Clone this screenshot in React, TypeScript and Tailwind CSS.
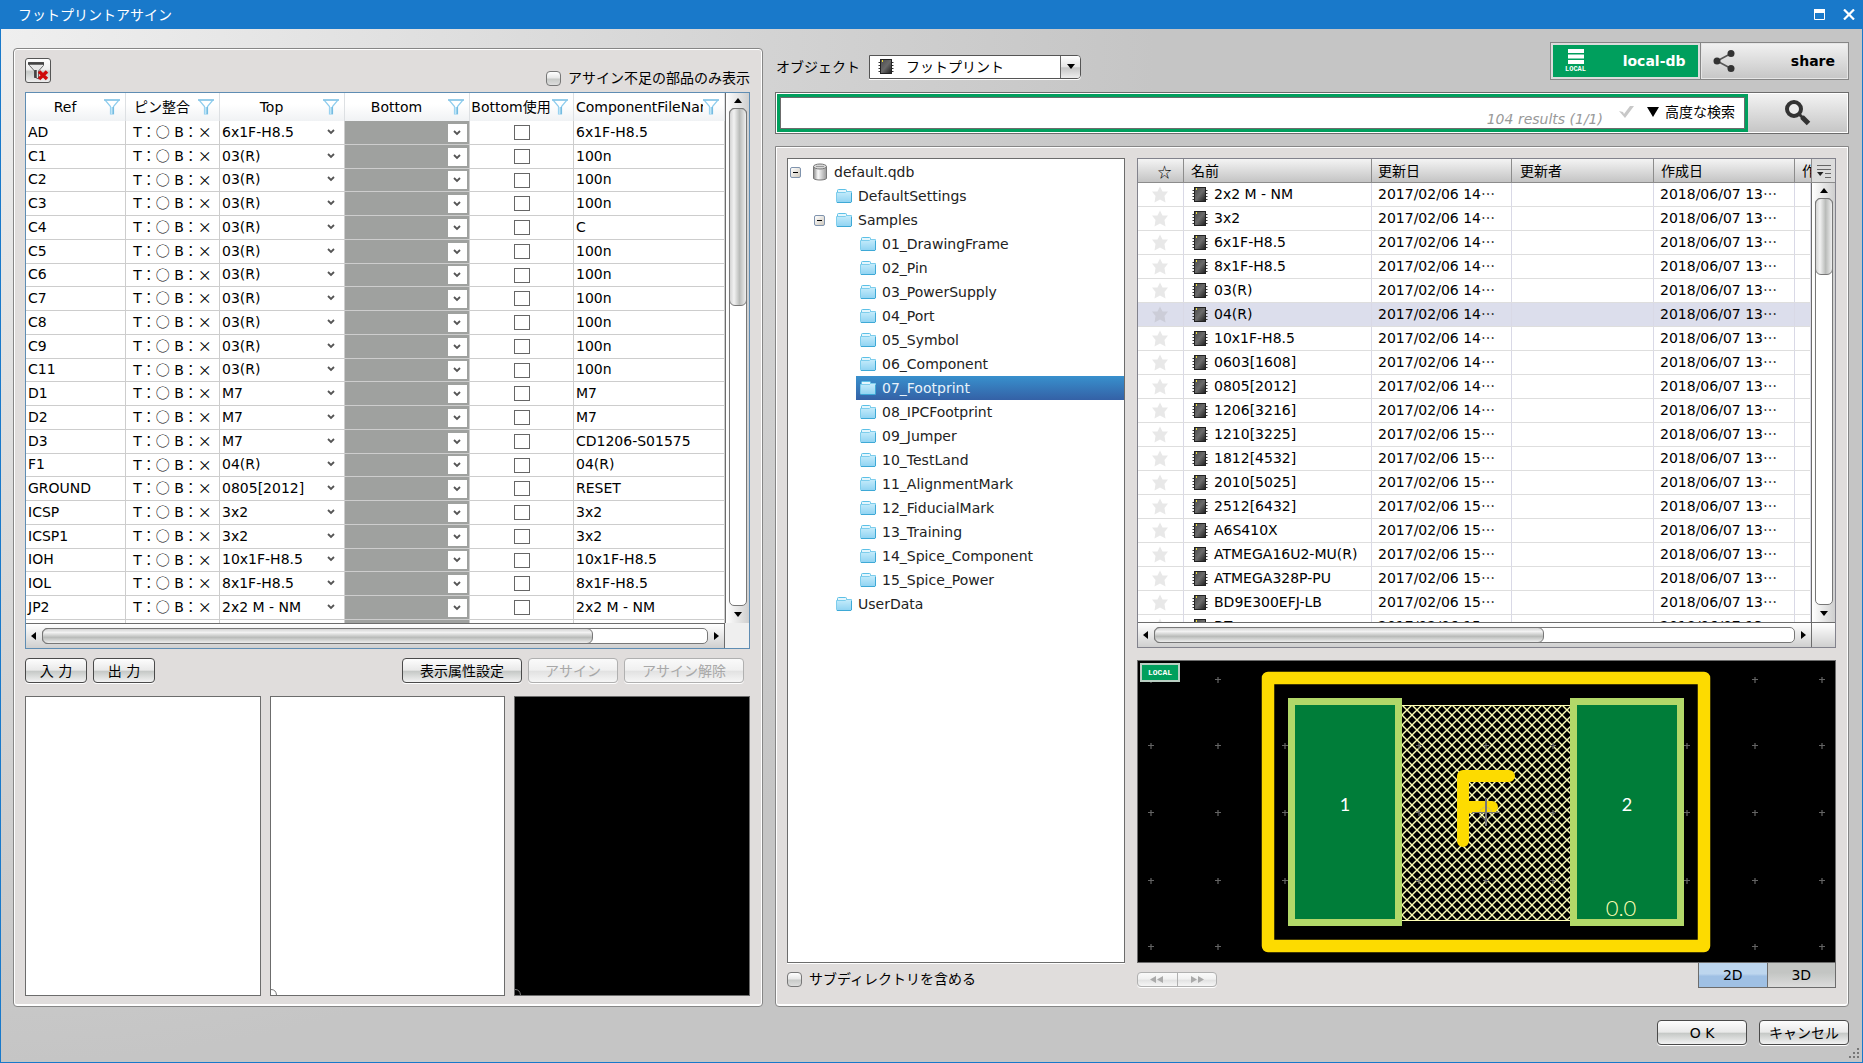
import { useState } from 'react';
import clsx from 'clsx';

const parts = [
  ['AD', '6x1F-H8.5', '6x1F-H8.5'],
  ['C1', '03(R)', '100n'],
  ['C2', '03(R)', '100n'],
  ['C3', '03(R)', '100n'],
  ['C4', '03(R)', 'C'],
  ['C5', '03(R)', '100n'],
  ['C6', '03(R)', '100n'],
  ['C7', '03(R)', '100n'],
  ['C8', '03(R)', '100n'],
  ['C9', '03(R)', '100n'],
  ['C11', '03(R)', '100n'],
  ['D1', 'M7', 'M7'],
  ['D2', 'M7', 'M7'],
  ['D3', 'M7', 'CD1206-S01575'],
  ['F1', '04(R)', '04(R)'],
  ['GROUND', '0805[2012]', 'RESET'],
  ['ICSP', '3x2', '3x2'],
  ['ICSP1', '3x2', '3x2'],
  ['IOH', '10x1F-H8.5', '10x1F-H8.5'],
  ['IOL', '8x1F-H8.5', '8x1F-H8.5'],
  ['JP2', '2x2 M - NM', '2x2 M - NM'],
  ['', '', ''],
];

const folders = [
  '01_DrawingFrame',
  '02_Pin',
  '03_PowerSupply',
  '04_Port',
  '05_Symbol',
  '06_Component',
  '07_Footprint',
  '08_IPCFootprint',
  '09_Jumper',
  '10_TestLand',
  '11_AlignmentMark',
  '12_FiducialMark',
  '13_Training',
  '14_Spice_Component',
  '15_Spice_Power',
];

const footprints = [
  ['2x2 M - NM', '14'],
  ['3x2', '14'],
  ['6x1F-H8.5', '14'],
  ['8x1F-H8.5', '14'],
  ['03(R)', '14'],
  ['04(R)', '14'],
  ['10x1F-H8.5', '14'],
  ['0603[1608]', '14'],
  ['0805[2012]', '14'],
  ['1206[3216]', '14'],
  ['1210[3225]', '15'],
  ['1812[4532]', '15'],
  ['2010[5025]', '15'],
  ['2512[6432]', '15'],
  ['A6S410X', '15'],
  ['ATMEGA16U2-MU(R)', '15'],
  ['ATMEGA328P-PU', '15'],
  ['BD9E300EFJ-LB', '15'],
  ['BZ', '15'],
];

const glossy =
  'border border-[#4a4a4a] rounded-[4px] shadow-[0_1px_0_#fff] bg-[linear-gradient(#fdfdfd,#e9e9e9_48%,#c6c9c7_54%,#f2f2f2)]';
const glossyOff = 'border border-[#b0b0b0] rounded-[4px] shadow-[0_1px_0_#fff] bg-[linear-gradient(#fafafa,#f0f0f0_48%,#e2e2e2_54%,#f6f6f6)] text-[#a8a8a8]';
const panel = 'border border-[#868686] rounded-[4px] bg-[#e0dddc] shadow-[inset_0_0_0_1px_#fff,inset_0_-2px_0_#fff]';
const jp = "font-['Noto_Sans_CJK_JP',sans-serif]";

function FilterIcon() {
  return (
    <svg width="16" height="16" viewBox="0 0 16 16" aria-hidden>
      <path d="M1 1h14L9.5 7.5V15H6.500V7.500Z" fill="#fff" stroke="#8fcdee" strokeWidth="1.200" />
      <path d="M0 1h16" stroke="#86c5e6" strokeWidth="1.500" />
      <path d="M9 8v7" stroke="#6cb6dc" strokeWidth="1.500" />
      <path d="M7.500 8v7" stroke="#bfe6f8" strokeWidth="1.500" />
    </svg>
  );
}

function ChipIcon() {
  return (
    <svg width="16" height="16" viewBox="0 0 16 16" className="shrink-0" aria-hidden>
      <defs>
        <linearGradient id="chip" x1="0" y1="0" x2="1" y2="1">
          <stop offset="0" stopColor="#4a4a4a" />
          <stop offset=".5" stopColor="#6a6a6a" />
          <stop offset="1" stopColor="#1c1c1c" />
        </linearGradient>
      </defs>
      <path d="M.5 4.500h15M.5 7.500h15M.5 10.500h15M.5 13.500h15" stroke="#333" />
      <rect x="2.500" y="1.500" width="11" height="14" fill="url(#chip)" stroke="#222" />
      <path d="M4.500 2v2" stroke="#f0e03c" />
    </svg>
  );
}

function FolderIcon() {
  return (
    <svg width="16" height="16" viewBox="0 0 16 16" className="shrink-0" aria-hidden>
      <defs>
        <linearGradient id="folder" x1="0" y1="0" x2="0" y2="1">
          <stop offset="0" stopColor="#c6ecfb" />
          <stop offset="1" stopColor="#8fd3f2" />
        </linearGradient>
      </defs>
      <path d="M1.500 5V2.500q0-1 1-1h7q1 0 1 1V4" fill="#e4f6fd" stroke="#5cc0e6" />
      <path d="M.5 4.500h9l1-1h5v10q0 1-1 1h-13q-1 0-1-1Z" fill="url(#folder)" stroke="#7dcdec" />
      <path d="M1 14.500h14M15.500 5v9" stroke="#3ea9d6" />
    </svg>
  );
}

function DbIcon() {
  return (
    <svg width="16" height="18" viewBox="0 0 16 18" className="shrink-0" aria-hidden>
      <defs>
        <linearGradient id="db">
          <stop offset="0" stopColor="#8a8a8a" />
          <stop offset=".35" stopColor="#fafafa" />
          <stop offset="1" stopColor="#9a9a9a" />
        </linearGradient>
      </defs>
      <path d="M1.500 3.500v12c2 2 11 2 13 0v-12Z" fill="url(#db)" stroke="#777" />
      <ellipse cx="8" cy="3.500" rx="6.500" ry="2.500" fill="#d8d8d8" stroke="#777" />
      <path d="M4 3.500h8" stroke="#999" />
    </svg>
  );
}

function Chevron() {
  return (
    <svg width="8" height="6" viewBox="0 0 8 6" aria-hidden>
      <path d="M1 1l3 3 3-3" fill="none" stroke="#555" strokeWidth="1.800" />
    </svg>
  );
}

function Triangle({ dir }: { dir: 'up' | 'down' | 'left' | 'right' }) {
  const d = { up: 'M4 1l4 5H0Z', down: 'M4 6l4-5H0Z', left: 'M1 4l5-4v8Z', right: 'M7 4L2 0v8Z' }[dir];
  return (
    <svg width="8" height="8" viewBox="0 0 8 8" aria-hidden>
      <path d={d} fill="#000" />
    </svg>
  );
}

function VScroll({ thumb }: { thumb: string }) {
  return (
    <div className="w-[24px] shrink-0 flex flex-col items-center border-l border-[#6c6c6c] bg-[linear-gradient(90deg,#fff,#cfcfcf)]">
      <div className="h-[15px] flex items-center"><Triangle dir="up" /></div>
      <div className="flex-1 w-[18px] rounded-[5px] border border-[#777] bg-white">
        <div className={clsx('-m-px rounded-[6px] border border-[#777] bg-[linear-gradient(90deg,#d4d4d4,#f2f2f2_25%,#b9bbb9_60%,#eee)]', thumb)} />
      </div>
      <div className="h-[17px] flex items-center"><Triangle dir="down" /></div>
    </div>
  );
}

function HScroll({ thumb }: { thumb: string }) {
  return (
    <div className="flex-1 flex items-center border-t border-r border-[#6c6c6c] bg-[linear-gradient(#fff,#cfcfcf)]">
      <div className="w-4 flex justify-center"><Triangle dir="left" /></div>
      <div className="flex-1 h-4 rounded-[5px] border border-[#777] bg-white">
        <div className={clsx('-m-px h-4 rounded-[6px] border border-[#777] bg-[linear-gradient(#d4d4d4,#f2f2f2_25%,#b9bbb9_60%,#eee)]', thumb)} />
      </div>
      <div className="w-4 flex justify-center"><Triangle dir="right" /></div>
    </div>
  );
}

function GlossCheck({ label }: { label: string }) {
  return (
    <label className="flex items-center gap-[7px]">
      <input
        type="checkbox"
        className="appearance-none size-[15px] rounded-[4px] border border-[#777] bg-[linear-gradient(#fff,#e8e8e8_45%,#c8cac8_55%,#ddd)] checked:bg-[#8ab]"
      />
      {label}
    </label>
  );
}

function PartsTable() {
  const heads = ['Ref', 'ピン整合', 'Top', 'Bottom', 'Bottom使用', 'ComponentFileName'];
  return (
    <div className="flex-1 min-h-0 flex flex-col border border-[#5f8db3] bg-white">
      <div className="flex-1 min-h-0 flex">
        <div className="flex-1 min-w-0 overflow-hidden">
          <table className="w-full table-fixed border-separate border-spacing-0">
            <colgroup>
              <col className="w-[100px]" />
              <col className="w-[94px]" />
              <col className="w-[125px]" />
              <col className="w-[125px]" />
              <col className="w-[104px]" />
              <col />
            </colgroup>
            <thead>
              <tr className="h-7 bg-[linear-gradient(#fff_40%,#f0f2f4)]">
                {heads.map((h, i) => (
                  <th key={h} className="p-0 font-normal border-r border-[#dde0e3]">
                    <div className="flex items-center pr-[5px]">
                      <span className={clsx('flex-1 min-w-0 overflow-hidden whitespace-nowrap', i === 5 && 'text-left pl-[2px]')}>{h}</span>
                      <button aria-label={`${h} フィルタ`} className="shrink-0"><FilterIcon /></button>
                    </div>
                  </th>
                ))}
              </tr>
            </thead>
            <tbody className="leading-[18px]">
              {parts.map(([ref, top, file], i) => (
                <tr key={i} className="h-6 nth-[4n+3]:h-[23px] [&>td]:p-0 [&>td]:border-r [&>td]:border-b [&>td]:border-[#cdcdcd]">
                  <td><div className="pl-[2px] pb-[2px]">{ref}</div></td>
                  <td className="text-center whitespace-nowrap">
                    {ref && (
                      <div className="pb-[2px]">
                        T<span className={jp}>：○</span> B<span className={jp}>：×</span>
                      </div>
                    )}
                  </td>
                  <td>
                    <div className="relative flex items-center pb-[2px]">
                      <select aria-label={`${ref} Top`} className="appearance-none w-full h-[18px] pl-[2px] outline-none">
                        <option>{top}</option>
                      </select>
                      {ref && <span className="absolute right-[9px] pointer-events-none"><Chevron /></span>}
                    </div>
                  </td>
                  <td className="bg-[#9fa19f]">
                    <div className="relative flex items-center justify-end h-[18px] pr-[2px]">
                      <select aria-label={`${ref} Bottom`} className="appearance-none w-[19px] h-[18px] bg-white outline-none" />
                      <span className="absolute right-[8px] pointer-events-none"><Chevron /></span>
                    </div>
                  </td>
                  <td>
                    <input type="checkbox" aria-label={`${ref} Bottom使用`} className="appearance-none block mx-auto w-4 h-[15px] border border-[#666] bg-white checked:bg-[#8ab]" />
                  </td>
                  <td><div className="pl-[2px] pb-[2px]">{file}</div></td>
                </tr>
              ))}
            </tbody>
          </table>
        </div>
        <VScroll thumb="h-[40%]" />
      </div>
      <div className="h-[25px] shrink-0 flex">
        <HScroll thumb="w-[83%]" />
        <div className="w-6 bg-[#efefef]" />
      </div>
    </div>
  );
}

function LeftPanel() {
  return (
    <section className={clsx(panel, 'min-w-0 min-h-0 flex flex-col pl-[11px] pr-[12px] pt-[9px] pb-[10px]')}>
      <div className="flex items-start justify-between h-[34px]">
        <button aria-label="フィルタ解除" className="w-[26px] h-[25px] border border-[#555] rounded-[3px] bg-[linear-gradient(#fff,#eee_45%,#c6c9c7_55%,#eee)] flex items-center justify-center">
          <svg width="22" height="20" viewBox="0 0 22 20" aria-hidden>
            <path d="M1.500 1.500h15v3l-5 5.500v8l-4-2v-6l-5-5.500Z" fill="#e8e8e8" stroke="#666" />
            <path d="M1 2.500h16" stroke="#444" strokeWidth="2.500" />
            <path d="M8.500 9v8" stroke="#444" strokeWidth="2.500" />
            <path d="M12 10.500l8 7.500M20 10.500l-8 7.500" stroke="#cf0a0a" strokeWidth="3.500" />
          </svg>
        </button>
        <div className="pt-[10px]"><GlossCheck label="アサイン不足の部品のみ表示" /></div>
      </div>
      <PartsTable />
      <div className="flex gap-[6px] mt-[9px] pr-[6px] h-[25px] shrink-0">
        <button className={clsx(glossy, 'w-[62px]')}>入 力</button>
        <button className={clsx(glossy, 'w-[62px]')}>出 力</button>
        <button className={clsx(glossy, 'w-[120px] ml-auto')}>表示属性設定</button>
        <button disabled className={clsx(glossyOff, 'w-[90px]')}>アサイン</button>
        <button disabled className={clsx(glossyOff, 'w-[120px]')}>アサイン解除</button>
      </div>
      <div className="grid grid-cols-3 gap-[9px] mt-[13px] h-[300px] shrink-0">
        <div className="border border-[#6c6c6c] bg-white" />
        <div className="border border-[#6c6c6c] bg-white flex items-end"><CornerMark /></div>
        <div className="border border-[#6c6c6c] bg-black flex items-end"><CornerMark /></div>
      </div>
    </section>
  );
}

function CornerMark() {
  return (
    <svg width="6" height="6" viewBox="0 0 6 6" aria-hidden>
      <path d="M0 .5Q5 .5 5.500 6" fill="none" stroke="#777" />
    </svg>
  );
}

function Expander() {
  return (
    <button aria-label="折りたたむ" className="size-[11px] shrink-0 border border-[#7f93ad] rounded-[2px] bg-[linear-gradient(135deg,#fff,#cfc9be)] flex items-center justify-center">
      <span className="w-[5px] h-px bg-black" />
    </button>
  );
}

function Tree() {
  const [selected, setSelected] = useState('07_Footprint');
  const row = 'h-6 w-full flex items-center';
  return (
    <ul className="flex-1 min-h-0 overflow-hidden pt-px border border-[#6c6c6c] bg-white shadow-[0_1px_0_#fff] text-[#222]">
      <li>
        <div className={clsx(row, 'pl-[2px]')}><Expander /><span className="ml-[11px] flex gap-[6px] items-center"><DbIcon />default.qdb</span></div>
        <ul>
          <li className={clsx(row, 'pl-[48px] gap-[6px]')}><FolderIcon />DefaultSettings</li>
          <li>
            <div className={clsx(row, 'pl-[26px]')}><Expander /><span className="ml-[11px] flex gap-[6px] items-center"><FolderIcon />Samples</span></div>
            <ul className="pl-[68px]">
              {folders.map((f) => (
                <li key={f}>
                  <button
                    onClick={() => setSelected(f)}
                    className={clsx(row, 'pl-1 gap-[6px]', f === selected && 'bg-[linear-gradient(#3890cd,#3461a6)] text-[#e8f2fa]')}
                  >
                    <FolderIcon />
                    {f}
                  </button>
                </li>
              ))}
            </ul>
          </li>
          <li className={clsx(row, 'pl-[48px] gap-[6px]')}><FolderIcon />UserData</li>
        </ul>
      </li>
    </ul>
  );
}

function FootprintList() {
  const th = 'p-0 font-normal text-left border-r border-b border-[#8c8c8c]';
  return (
    <div className="flex-1 min-h-0 flex flex-col border border-[#82828c] bg-white">
      <div className="flex-1 min-h-0 flex">
        <div className="flex-1 min-w-0 overflow-hidden">
          <table className="w-full table-fixed border-separate border-spacing-0">
            <colgroup>
              <col className="w-[46px]" />
              <col className="w-[188px]" />
              <col className="w-[140px]" />
              <col className="w-[142px]" />
              <col className="w-[141px]" />
              <col />
            </colgroup>
            <thead>
              <tr className="h-6 bg-[linear-gradient(#f4f4f4,#c2c2c2)]">
                <th className={th}><div className={clsx(jp, 'pl-[8px] text-center leading-[20px]')}>☆</div></th>
                <th className={clsx(th, 'pl-[7px]')}>名前</th>
                <th className={clsx(th, 'pl-[6px]')}>更新日</th>
                <th className={clsx(th, 'pl-2')}>更新者</th>
                <th className={clsx(th, 'pl-[7px]')}>作成日</th>
                <th className={clsx(th, 'border-r-0')}><div className="pl-[7px] overflow-hidden whitespace-nowrap">作</div></th>
              </tr>
            </thead>
            <tbody className="leading-[20px]">
              {footprints.map(([name, hour]) => (
                <tr key={name} className={clsx('h-6 [&>td]:p-0 [&>td]:border-r [&>td]:border-[#d9d9e6] [&>td]:border-b [&>td]:border-b-[#dedede]', name === '04(R)' && 'bg-[#dcdeec]')}>
                  <td>
                    <svg width="16" height="17" viewBox="0 0 16 17" className="ml-[14px]" aria-hidden>
                      <path d="M8 .5l2.500 5h5.500l-3.500 4.500 1 6.500-5.500-3-5.500 3 1-6.500-3.500-4.500h5.500Z" fill="#8c8c8c" fillOpacity=".2" />
                    </svg>
                  </td>
                  <td><div className="flex items-center gap-[6px] pl-[8px] pb-[2px] whitespace-nowrap"><ChipIcon />{name}</div></td>
                  <td><div className="pl-[6px] pb-[2px] whitespace-nowrap">2017/02/06 {hour}<span className={jp}>…</span></div></td>
                  <td />
                  <td><div className="pl-[6px] pb-[2px] whitespace-nowrap">2018/06/07 13<span className={jp}>…</span></div></td>
                  <td />
                </tr>
              ))}
            </tbody>
          </table>
        </div>
        <div className="flex flex-col">
          <button aria-label="列の設定" className="h-6 w-[24px] bg-[#dcdcdc] border-l border-b border-[#8c8c8c] flex items-center justify-center">
            <svg width="14" height="14" viewBox="0 0 14 14" aria-hidden>
              <path d="M0 1.500h14M0 5.500h14M8 9.500h6M8 13.500h6" stroke="#666" />
              <path d="M0 8h6.500L3.200 12Z" fill="#222" />
            </svg>
          </button>
          <div className="flex-1 flex"><VScroll thumb="h-[19%]" /></div>
        </div>
      </div>
      <div className="h-[25px] shrink-0 flex">
        <HScroll thumb="w-[61%]" />
        <div className="w-[23px] border-t border-[#6c6c6c] bg-[linear-gradient(#fff,#cfcfcf)]" />
      </div>
    </div>
  );
}

const gridX = [13, 80, 147, 281, 348, 415, 549, 617, 684];
const gridY = [18, 84, 151, 219, 285];

function Preview() {
  return (
    <div className="relative h-[303px] shrink-0 mt-3 border border-[#6c6c6c] bg-black">
      <svg className="w-full h-full" viewBox="0 0 697 301" role="img" aria-label="フットプリントのプレビュー">
        <defs>
          <pattern id="hatch" width="10" height="10" patternUnits="userSpaceOnUse" x="4" y="4">
            <path d="M-1-1l12 12M11-1L-1 11" stroke="#ffffb4" strokeWidth="1.400" />
          </pattern>
        </defs>
        <rect x="264" y="44" width="168" height="215" fill="url(#hatch)" />
        <path d="M264 44.500h168M264 259.500h168" stroke="#ffffb4" />
        {gridY.flatMap((y) =>
          gridX
            .filter((x) => !((y === 18 || y === 285) && x > 100 && x < 600))
            .map((x) => <path key={`${x}-${y}`} d={`M${x - 3} ${y + 0.5}h6M${x} ${y - 2}v6`} stroke="#646464" strokeWidth="1.200" />),
        )}
        <path d="M130 17h436v268h-436Z" fill="none" stroke="#fddb00" strokeWidth="12.500" strokeLinejoin="round" />
        <rect x="153.500" y="40.500" width="107" height="221" fill="#007d39" stroke="#b2d869" strokeWidth="7" />
        <rect x="435.500" y="40.500" width="107" height="221" fill="#007d39" stroke="#b2d869" strokeWidth="7" />
        <path d="M371 115h-46v65M325 146h29" fill="none" stroke="#fddb00" strokeWidth="12" strokeLinecap="round" strokeLinejoin="round" />
        <path d="M348 145l5 4v6l-5 5-6-5v-6Z" fill="none" stroke="#aaa" strokeWidth=".800" strokeDasharray="2 1" />
        <path d="M334 151.500h28" stroke="#777" />
        <path d="M348 137v28" stroke="#777" strokeWidth="2" />
        <g fill="#fff" textAnchor="middle" className="font-['Lato',sans-serif]">
          <text x="207" y="150" fontSize="18">1</text>
          <text x="489" y="150" fontSize="18">2</text>
          <text x="483" y="255" fontSize="22" fontWeight="300" fill="#ffffb4">0.0</text>
        </g>
      </svg>
      <span className="absolute left-[2px] top-[2px] w-10 h-[19px] border-2 border-[#b9cfc3] bg-[#009f5d] text-white text-[8px] font-bold leading-[15px] text-center font-['Liberation_Mono',monospace]">
        LOCAL
      </span>
    </div>
  );
}

function ObjectBar() {
  return (
    <div className="flex justify-between h-[38px]">
      <div className="flex items-center gap-[9px] pt-[12px]">
        <label htmlFor="object" className="pl-px">オブジェクト</label>
        <div className="relative w-[212px] h-6 flex bg-white border border-[#555] rounded-r-[4px] shadow-[0_1px_0_#fff]">
          <select id="object" className="appearance-none flex-1 pl-[36px] outline-none">
            <option>フットプリント</option>
          </select>
          <span className="absolute left-[8px] top-[2px] pointer-events-none"><ChipIcon /></span>
          <span className="absolute right-0 w-[20px] h-full border-l border-[#666] rounded-r-[3px] bg-[linear-gradient(#fff,#e6e6e6_48%,#c6c6c6_54%,#eee)] flex items-center justify-center pointer-events-none">
            <Triangle dir="down" />
          </span>
        </div>
      </div>
      <div className="w-[299px] grid grid-cols-2 border border-[#868686] font-bold">
        <button className="flex items-center justify-between pl-3 pr-[12px] text-white bg-[#009f5d] border-2 border-[#dcdcdc]">
          <span className="flex flex-col items-center">
            <svg width="16" height="15" viewBox="0 0 16 15" aria-hidden>
              <path d="M0 2h16M0 7.500h16M0 13h16" stroke="#fff" strokeWidth="4" />
            </svg>
            <span className="mt-px text-[7px] leading-[8px] font-['Liberation_Mono',monospace]">LOCAL</span>
          </span>
          local-db
        </button>
        <button className="flex items-center justify-between pl-3 pr-[13px] border-l border-[#868686] bg-[linear-gradient(#f2f2f2,#c6c6c6)] shadow-[inset_0_0_0_1px_#e6e6e6]">
          <svg width="22" height="22" viewBox="0 0 22 22" aria-hidden>
            <path d="M18 3.500L4 11l14 7.500" fill="none" stroke="#555" strokeWidth="1.600" />
            <g fill="#333"><circle cx="18" cy="3.500" r="3.500" /><circle cx="4" cy="11" r="3.500" /><circle cx="18" cy="18.500" r="3.500" /></g>
          </svg>
          share
        </button>
      </div>
    </div>
  );
}

function SearchBar() {
  return (
    <div className="flex h-[42px] mt-3 border border-[#6c6c6c] bg-white p-px">
      <div className="flex-1 min-w-0 border-[3px] border-[#009f5d] flex">
        <div className="flex-1 flex items-center border border-[#6c6c6c] bg-white pb-[2px]">
          <input type="text" aria-label="検索" className="flex-1 min-w-0 h-full px-2 outline-none" />
          <span className="italic text-[#999] pt-[14px]">104 results (1/1)</span>
          <svg width="15" height="12" viewBox="0 0 15 12" className="ml-[16px]" aria-hidden>
            <path d="M0 5l4 1 1 2L11 0h4L6 12Z" fill="#c8c8c8" />
          </svg>
          <button className="ml-[13px] mr-[9px] flex items-center gap-[6px] text-black">
            <svg width="12" height="10" viewBox="0 0 12 10" aria-hidden><path d="M0 0h12L6 10Z" /></svg>
            高度な検索
          </button>
        </div>
      </div>
      <button aria-label="検索を実行" className="w-[99px] shrink-0 bg-[linear-gradient(#f2f2f2,#c6c6c6)] flex items-center justify-center">
        <svg width="26" height="26" viewBox="0 0 26 26" aria-hidden>
          <circle cx="9" cy="9" r="7" fill="#ececec" stroke="#333" strokeWidth="4" />
          <path d="M14 14l4 4" stroke="#333" strokeWidth="3" />
          <path d="M17 17l6.500 6.500" stroke="#333" strokeWidth="5" />
        </svg>
      </button>
    </div>
  );
}

function RightPanel() {
  return (
    <section className={clsx(panel, 'rounded-t-none mt-3 flex-1 min-h-0 flex gap-3 pl-[11px] pr-[12px] pt-[11px]')}>
      <div className="w-[338px] shrink-0 flex flex-col pb-[14px]">
        <Tree />
        <div className="h-[28px] mt-px pt-[5px] shrink-0"><GlossCheck label="サブディレクトリを含める" /></div>
      </div>
      <div className="flex-1 min-w-0 flex flex-col pb-[18px]">
        <FootprintList />
        <Preview />
        <div className="flex justify-between h-[25px] shrink-0">
          <div className={clsx(glossyOff, 'flex w-20 h-[15px] mt-[9px]')}>
            <button disabled aria-label="前へ" className="flex-1 border-r border-[#b0b0b0] flex items-center justify-center">
              <svg width="14" height="7" viewBox="0 0 14 7" aria-hidden><path d="M6 0v7L0 3.500ZM13 0v7L7 3.500Z" fill="#aaa" /></svg>
            </button>
            <button disabled aria-label="次へ" className="flex-1 flex items-center justify-center">
              <svg width="14" height="7" viewBox="0 0 14 7" aria-hidden><path d="M1 0v7l6-3.500ZM8 0v7l6-3.500Z" fill="#aaa" /></svg>
            </button>
          </div>
          <div className="flex w-[138px] border border-t-0 border-[#6c6c6c]">
            <button className="flex-1 bg-[linear-gradient(#bdd6ee_45%,#9fc0e4_55%)]">2D</button>
            <button className="flex-1 border-l border-[#6c6c6c] bg-[linear-gradient(#c3c5c3_40%,#dcdcdc)]">3D</button>
          </div>
        </div>
      </div>
    </section>
  );
}

export default function App() {
  return (
    <div
      lang="ja"
      className="h-screen flex flex-col bg-[#1979ca] text-[14px] leading-[20px] text-black font-['DejaVu_Sans','Noto_Sans_CJK_JP',sans-serif]"
    >
      <header className="h-[29px] shrink-0 flex items-center justify-between pl-[18px] pr-[8px] text-white">
        <h1>フットプリントアサイン</h1>
        <div className="flex items-center gap-[18px]">
          <button aria-label="最大化">
            <svg width="11" height="11" viewBox="0 0 11 11" aria-hidden>
              <path d="M.5.500h10v10h-10Z" fill="none" stroke="#fff" />
              <path d="M0 2h11" stroke="#fff" strokeWidth="4" />
            </svg>
          </button>
          <button aria-label="閉じる">
            <svg width="12" height="11" viewBox="0 0 12 11" aria-hidden>
              <path d="M1 .5l10 10M11 .5l-10 10" stroke="#fff" strokeWidth="2.200" />
            </svg>
          </button>
        </div>
      </header>
      <div className="flex-1 min-h-0 mx-px mb-px pl-3 pr-[13px] flex flex-col bg-[radial-gradient(ellipse_62%_100%_at_0_0,#efefef,#c5c5c5)]">
        <main className="flex-1 min-h-0 grid grid-cols-[750fr_1074fr] gap-3">
          <div className="pt-[19px] min-w-0 min-h-0 grid">
            <LeftPanel />
          </div>
          <div className="pt-[13px] min-w-0 min-h-0 flex flex-col">
            <ObjectBar />
            <SearchBar />
            <RightPanel />
          </div>
        </main>
        <footer className="h-[55px] shrink-0 flex justify-end gap-3 pt-[13px]">
          <button className={clsx(glossy, 'w-[90px] h-[25px]')}>O K</button>
          <button className={clsx(glossy, 'w-[90px] h-[25px]')}>キャンセル</button>
        </footer>
      </div>
      <svg width="12" height="12" viewBox="0 0 12 12" className="fixed right-[2px] bottom-[3px]" aria-hidden>
        <path d="M8 1h2M4 5h2M8 5h2M0 9h2M4 9h2M8 9h2" stroke="#777" strokeWidth="2" />
      </svg>
    </div>
  );
}
